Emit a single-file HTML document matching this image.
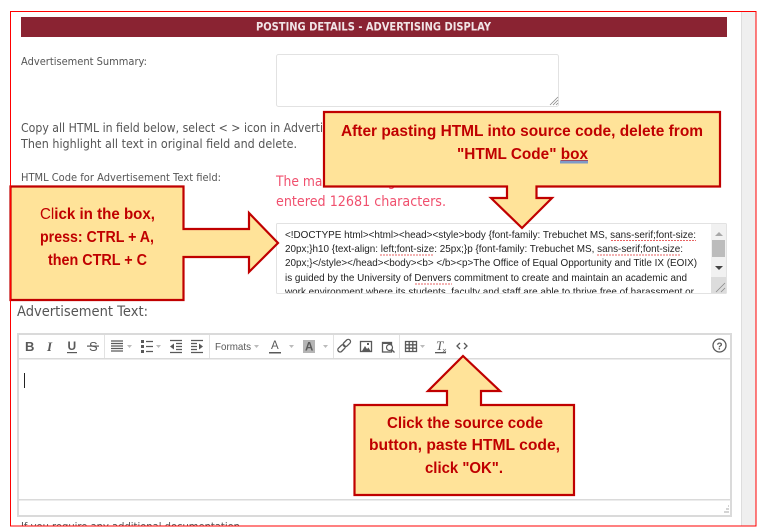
<!DOCTYPE html>
<html><head><meta charset="utf-8"><style>
html,body{margin:0;padding:0;background:#fff}
svg{display:block}
.l{font-family:"DejaVu Sans",sans-serif;fill:#555}
.c{font-family:"Liberation Sans",sans-serif;font-weight:bold;fill:#c00000;font-size:16px}
.t{font-family:"Liberation Sans",sans-serif;font-size:10.5px;fill:#222}
.i{fill:none;stroke:#595959;stroke-width:1.3}
.f{fill:#595959}
.car{fill:#bbb}
</style></head><body>
<svg width="767" height="532" viewBox="0 0 767 532" xmlns="http://www.w3.org/2000/svg">
<rect width="767" height="532" fill="#fff"/>
<rect x="741" y="12" width="15" height="514" fill="#efefef"/>
<rect x="741" y="12" width="1" height="514" fill="#ddd"/>
<rect x="21" y="17" width="706" height="20" fill="#8a2332"/>
<text x="256" y="30.500" font-family="'DejaVu Sans',sans-serif" font-weight="bold" font-size="11.500" fill="#f1e4e6" textLength="235" lengthAdjust="spacingAndGlyphs">POSTING DETAILS - ADVERTISING DISPLAY</text>

<text class="l" x="21" y="65" font-size="11" textLength="126" lengthAdjust="spacingAndGlyphs">Advertisement Summary:</text>
<rect x="276.500" y="54.500" width="282" height="52" rx="2" fill="#fff" stroke="#e2e2e2"/>
<path d="M550 105l8-8M553 105l5-5M556 105l2-2" stroke="#888" stroke-width=".8"/>

<text class="l" x="21" y="132" font-size="12.500" textLength="302" lengthAdjust="spacingAndGlyphs">Copy all HTML in field below, select &lt; &gt; icon in Adverti</text>
<text class="l" x="21" y="148" font-size="12.500" textLength="276" lengthAdjust="spacingAndGlyphs">Then highlight all text in original field and delete.</text>
<text class="l" x="21" y="181" font-size="11" textLength="200" lengthAdjust="spacingAndGlyphs">HTML Code for Advertisement Text field:</text>
<text x="276" y="186" font-family="'DejaVu Sans',sans-serif" font-size="14" fill="#f0506e" textLength="146" lengthAdjust="spacingAndGlyphs">The maximum length is</text>
<text x="276" y="206" font-family="'DejaVu Sans',sans-serif" font-size="14" fill="#f0506e" textLength="170" lengthAdjust="spacingAndGlyphs">entered 12681 characters.</text>

<rect x="276.500" y="223.500" width="450" height="70" rx="1" fill="#fff" stroke="#e2e2e2"/>
<svg x="277" y="224" width="449" height="69" viewBox="277 224 449 69">
<text class="t" x="285" y="238" textLength="411" lengthAdjust="spacingAndGlyphs">&lt;!DOCTYPE html&gt;&lt;html&gt;&lt;head&gt;&lt;style&gt;body {font-family: Trebuchet MS, sans-serif;font-size:</text>
<text class="t" x="285" y="252" textLength="398" lengthAdjust="spacingAndGlyphs">20px;}h10 {text-align: left;font-size: 25px;}p {font-family: Trebuchet MS, sans-serif;font-size:</text>
<text class="t" x="285" y="266" textLength="412" lengthAdjust="spacingAndGlyphs">20px;}&lt;/style&gt;&lt;/head&gt;&lt;body&gt;&lt;b&gt; &lt;/b&gt;&lt;p&gt;The Office of Equal Opportunity and Title IX (EOIX)</text>
<text class="t" x="285" y="281" textLength="402" lengthAdjust="spacingAndGlyphs">is guided by the University of Denvers commitment to create and maintain an academic and</text>
<text class="t" x="285" y="295" textLength="409" lengthAdjust="spacingAndGlyphs">work environment where its students, faculty and staff are able to thrive free of harassment or</text>
<g fill="none" stroke="#e03030" stroke-width=".7" stroke-dasharray="2 1">
<path d="M611 240.500h85M597 255h84M380 255h54M415 284h37"/>
</g>
<rect x="711" y="224" width="15" height="69" fill="#f1f1f1"/>
<path d="M715 236l4-4 4 4z" fill="#a8a8a8"/>
<rect x="712" y="240" width="13" height="17" fill="#bcbcbc"/>
<path d="M715 266l4 4 4-4z" fill="#444"/>
<rect x="711" y="277" width="15" height="16" fill="#dcdcdc"/>
<path d="M716 292l9-9M721 292l4-4" stroke="#888" stroke-width=".8"/>
</svg>

<text class="l" x="17" y="316" font-size="14" textLength="131" lengthAdjust="spacingAndGlyphs">Advertisement Text:</text>

<rect x="18" y="334" width="713" height="182" fill="#fff" stroke="#dadada" stroke-width="2"/>
<rect x="18" y="358" width="713" height="1.500" fill="#dadada"/>
<rect x="18" y="499" width="713" height="1.500" fill="#dadada"/>
<rect x="104" y="335" width="1" height="23" fill="#e2e2e2"/>
<rect x="209" y="335" width="1" height="23" fill="#e2e2e2"/>
<rect x="333" y="335" width="1" height="23" fill="#e2e2e2"/>
<rect x="399" y="335" width="1" height="23" fill="#e2e2e2"/>
<rect x="24" y="373" width="1" height="15" fill="#222"/>
<path d="M724 512h5M726 509h3M728 506h1" stroke="#aaa"/>

<!-- toolbar -->
<g font-family="'Liberation Sans',sans-serif" fill="#595959">
<text x="25" y="351" font-size="13" font-weight="bold">B</text>
<text x="47" y="351" font-size="13" font-style="italic" font-family="'Liberation Serif',serif" font-weight="bold">I</text>
<text x="67.500" y="350" font-size="12" font-weight="bold">U</text>
<rect x="67" y="352" width="10" height="1.200"/>
<text x="89" y="351" font-size="13">S</text>
<rect x="87" y="345.500" width="12" height="1.200"/>
</g>
<path class="i" d="M111 341h12M111 343.500h12M111 346h12M111 348.500h12M111 351h12" stroke-width="1.500"/>
<path class="car" d="M127 345h5l-2.500 3z"/>
<path class="f" d="M141 340h3v3h-3zM141 345h3v3h-3zM141 350h3v3h-3z"/>
<path class="i" d="M146 341.500h7M146 346.500h7M146 351.500h7" stroke-width="1.500"/>
<path class="car" d="M156 345h5l-2.500 3z"/>
<path class="i" d="M170 340.500h12M176 343.500h6M176 346.500h6M176 349.500h6M170 352.500h12"/>
<path class="f" d="M174 343.500v6l-4-3z"/>
<path class="i" d="M191 340.500h12M191 343.500h6M191 346.500h6M191 349.500h6M191 352.500h12"/>
<path class="f" d="M199 343.500v6l4-3z"/>
<text x="215" y="350" font-family="'Liberation Sans',sans-serif" font-size="10.500" fill="#595959" textLength="36" lengthAdjust="spacingAndGlyphs">Formats</text>
<path class="car" d="M254 345h5l-2.500 3z"/>
<text x="271" y="349" font-family="'Liberation Sans',sans-serif" font-size="11.500" fill="#595959">A</text>
<rect x="269" y="352" width="12" height="1.500" fill="#595959"/>
<path class="car" d="M289 345h5l-2.500 3z"/>
<rect x="303" y="340" width="12" height="13" fill="#b5b5b5"/>
<text x="305" y="350.500" font-family="'Liberation Sans',sans-serif" font-weight="bold" font-size="11.500" fill="#595959">A</text>
<path class="car" d="M323 345h5l-2.500 3z"/>
<g class="i" transform="rotate(-45 344 345.500)">
<rect x="336" y="343.500" width="8.500" height="4.500" rx="2.200"/>
<rect x="343.500" y="343.500" width="8.500" height="4.500" rx="2.200"/>
</g>
<rect x="360.500" y="341.500" width="11" height="10" class="i"/>
<path class="f" d="M362 351l3-5 2 3 1.500-1.500 2 3.500z"/>
<rect x="367" y="343" width="2" height="2" class="f"/>
<rect x="382.500" y="342.500" width="9" height="9.500" class="i"/>
<path class="f" d="M383 342h9v2h-9z"/>
<circle cx="389.500" cy="347.500" r="3" fill="#fff" stroke="#595959" stroke-width="1.200"/>
<path class="i" d="M391.500 349.500l3 3"/>
<path class="i" d="M405.500 341.500h11v10h-11zM405.500 344.800h11M405.500 348.200h11M409.200 341.500v10M412.800 341.500v10" stroke-width="1"/>
<path class="car" d="M420 345h5l-2.500 3z"/>
<text x="436" y="350" font-family="'Liberation Serif',serif" font-style="italic" font-size="13" fill="#595959">T</text>
<rect x="435" y="352" width="11" height="1.300" fill="#595959"/>
<path d="M443 349l3 3M446 349l-3 3" stroke="#777" stroke-width=".8"/>
<path class="i" d="M460 343l-3 3 3 3M464 343l3 3-3 3"/>
<circle cx="719.500" cy="345.500" r="6.500" fill="none" stroke="#595959" stroke-width="1.300"/>
<text x="716.500" y="349.500" font-family="'Liberation Sans',sans-serif" font-weight="bold" font-size="10" fill="#595959">?</text>

<svg x="11" y="518" width="300" height="8" viewBox="11 518 300 8">
<text class="l" x="21" y="530" font-size="11" textLength="219" lengthAdjust="spacingAndGlyphs">If you require any additional documentation</text>
</svg>

<!-- callouts -->
<path d="M324 112H720V186.500H536.500V198H552L522 228L491 198H507V186.500H324Z" fill="#ffe399" stroke="#c00000" stroke-width="2.200"/>
<path d="M10.500 186.500H183.500V229H249V213L278 243L249 272V257H183.500V300H10.500Z" fill="#ffe399" stroke="#c00000" stroke-width="2.200"/>
<path d="M354.500 405H447V391H428L463 356L500 391H481V405H574V495H354.500Z" fill="#ffe399" stroke="#c00000" stroke-width="2.200"/>

<text class="c" x="341" y="136" textLength="362" lengthAdjust="spacingAndGlyphs">After pasting HTML into source code, delete from</text>
<text class="c" x="457" y="159" textLength="131" lengthAdjust="spacingAndGlyphs">"HTML Code" <tspan text-decoration="underline">box</tspan></text>
<rect x="560" y="160.500" width="28" height="3" fill="#7f9bc8"/>
<text class="c" x="40" y="219" textLength="115" lengthAdjust="spacingAndGlyphs"><tspan font-weight="normal">Cl</tspan>ick in the box,</text>
<text class="c" x="40" y="242" textLength="114" lengthAdjust="spacingAndGlyphs">press: CTRL + A,</text>
<text class="c" x="48" y="265" textLength="99" lengthAdjust="spacingAndGlyphs">then CTRL + C</text>
<text class="c" x="387" y="428" textLength="156" lengthAdjust="spacingAndGlyphs">Click the source code</text>
<text class="c" x="369" y="450" textLength="191" lengthAdjust="spacingAndGlyphs">button, paste HTML code,</text>
<text class="c" x="425" y="473" textLength="78" lengthAdjust="spacingAndGlyphs">click "OK".</text>

<!-- outer red frame -->
<rect x="10.500" y="11.500" width="745.500" height="514.500" fill="none" stroke="#ff0000" stroke-width="1"/>
</svg>
</body></html>
